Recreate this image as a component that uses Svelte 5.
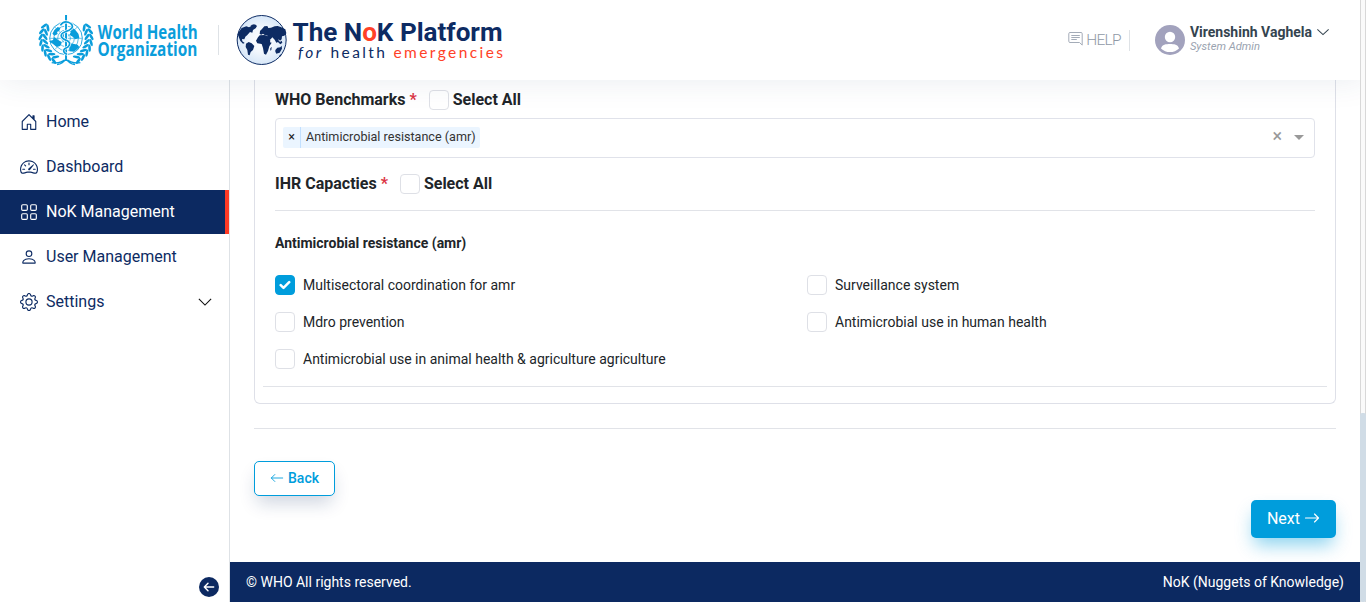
<script>
  const paths = {
    home: ['M8.354 1.146a.5.5 0 0 0-.708 0l-6 6A.5.5 0 0 0 1.5 7.5v7a.5.5 0 0 0 .5.5h4.5a.5.5 0 0 0 .5-.5v-4h2v4a.5.5 0 0 0 .5.5H14a.5.5 0 0 0 .5-.5v-7a.5.5 0 0 0-.146-.354L13 5.793V2.5a.5.5 0 0 0-.5-.5h-1a.5.5 0 0 0-.5.5v1.293L8.354 1.146zM2.5 14V7.707l5.5-5.5 5.5 5.5V14H10v-4a.5.5 0 0 0-.5-.5h-3a.5.5 0 0 0-.5.5v4H2.5z'],
    gauge: ['M8 4a.5.5 0 0 1 .5.5V6a.5.5 0 0 1-1 0V4.5A.5.5 0 0 1 8 4zM3.732 5.732a.5.5 0 0 1 .707 0l.915.914a.5.5 0 1 1-.708.708l-.914-.915a.5.5 0 0 1 0-.707zM2 10a.5.5 0 0 1 .5-.5h1.586a.5.5 0 0 1 0 1H2.5A.5.5 0 0 1 2 10zm9.5 0a.5.5 0 0 1 .5-.5h1.5a.5.5 0 0 1 0 1H12a.5.5 0 0 1-.5-.5zm.754-4.246a.389.389 0 0 0-.527-.02L7.547 9.31a.91.91 0 1 0 1.302 1.258l3.434-4.297a.389.389 0 0 0-.029-.518z', 'M0 10a8 8 0 1 1 15.547 2.661c-.442 1.253-1.845 1.602-2.932 1.25C11.309 13.488 9.475 13 8 13c-1.474 0-3.31.488-4.615.911-1.087.352-2.49.003-2.932-1.25A7.988 7.988 0 0 1 0 10zm8-7a7 7 0 0 0-6.603 9.329c.203.575.923.876 1.68.63C4.397 12.533 6.358 12 8 12s3.604.532 4.923.96c.757.245 1.477-.056 1.68-.631A7 7 0 0 0 8 3z'],
    grid: ['M1 2.5A1.5 1.5 0 0 1 2.5 1h3A1.5 1.5 0 0 1 7 2.5v3A1.5 1.5 0 0 1 5.5 7h-3A1.5 1.5 0 0 1 1 5.5v-3zM2.5 2a.5.5 0 0 0-.5.5v3a.5.5 0 0 0 .5.5h3a.5.5 0 0 0 .5-.5v-3a.5.5 0 0 0-.5-.5h-3zm6.5.5A1.5 1.5 0 0 1 10.5 1h3A1.5 1.5 0 0 1 15 2.5v3A1.5 1.5 0 0 1 13.5 7h-3A1.5 1.5 0 0 1 9 5.5v-3zm1.5-.5a.5.5 0 0 0-.5.5v3a.5.5 0 0 0 .5.5h3a.5.5 0 0 0 .5-.5v-3a.5.5 0 0 0-.5-.5h-3zM1 10.5A1.5 1.5 0 0 1 2.5 9h3A1.5 1.5 0 0 1 7 10.5v3A1.5 1.5 0 0 1 5.5 15h-3A1.5 1.5 0 0 1 1 13.5v-3zm1.5-.5a.5.5 0 0 0-.5.5v3a.5.5 0 0 0 .5.5h3a.5.5 0 0 0 .5-.5v-3a.5.5 0 0 0-.5-.5h-3zm6.5.5A1.5 1.5 0 0 1 10.5 9h3a1.5 1.5 0 0 1 1.5 1.5v3a1.5 1.5 0 0 1-1.5 1.5h-3A1.5 1.5 0 0 1 9 13.5v-3zm1.5-.5a.5.5 0 0 0-.5.5v3a.5.5 0 0 0 .5.5h3a.5.5 0 0 0 .5-.5v-3a.5.5 0 0 0-.5-.5h-3z'],
    person: ['M8 8a3 3 0 1 0 0-6 3 3 0 0 0 0 6zm2-3a2 2 0 1 1-4 0 2 2 0 0 1 4 0zm4 8c0 1-1 1-1 1H3s-1 0-1-1 1-4 6-4 6 3 6 4zm-1-.004c-.001-.246-.154-.986-.832-1.664C11.516 10.68 10.289 10 8 10c-2.29 0-3.516.68-4.168 1.332-.678.678-.83 1.418-.832 1.664h10z'],
    gear: ['M8 4.754a3.246 3.246 0 1 0 0 6.492 3.246 3.246 0 0 0 0-6.492zM5.754 8a2.246 2.246 0 1 1 4.492 0 2.246 2.246 0 0 1-4.492 0z', 'M9.796 1.343c-.527-1.79-3.065-1.79-3.592 0l-.094.319a.873.873 0 0 1-1.255.52l-.292-.16c-1.64-.892-3.433.902-2.54 2.541l.159.292a.873.873 0 0 1-.52 1.255l-.319.094c-1.79.527-1.79 3.065 0 3.592l.319.094a.873.873 0 0 1 .52 1.255l-.16.292c-.892 1.64.901 3.434 2.541 2.54l.292-.159a.873.873 0 0 1 1.255.52l.094.319c.527 1.79 3.065 1.79 3.592 0l.094-.319a.873.873 0 0 1 1.255-.52l.292.16c1.64.893 3.434-.902 2.54-2.541l-.159-.292a.873.873 0 0 1 .52-1.255l.319-.094c1.79-.527 1.79-3.065 0-3.592l-.319-.094a.873.873 0 0 1-.52-1.255l.16-.292c.893-1.64-.902-3.433-2.541-2.54l-.292.159a.873.873 0 0 1-1.255-.52l-.094-.319zm-2.633.283c.246-.835 1.428-.835 1.674 0l.094.319a1.873 1.873 0 0 0 2.693 1.115l.291-.16c.764-.415 1.6.42 1.184 1.185l-.159.292a1.873 1.873 0 0 0 1.116 2.692l.318.094c.835.246.835 1.428 0 1.674l-.319.094a1.873 1.873 0 0 0-1.115 2.693l.16.291c.415.764-.42 1.6-1.185 1.184l-.291-.159a1.873 1.873 0 0 0-2.693 1.116l-.094.318c-.246.835-1.428.835-1.674 0l-.094-.319a1.873 1.873 0 0 0-2.692-1.115l-.292.16c-.764.415-1.6-.42-1.184-1.185l.159-.291A1.873 1.873 0 0 0 1.945 8.93l-.319-.094c-.835-.246-.835-1.428 0-1.674l.319-.094A1.873 1.873 0 0 0 3.06 4.377l-.16-.292c-.415-.764.42-1.6 1.185-1.184l.292.159a1.873 1.873 0 0 0 2.692-1.115l.094-.319z']
  };
  const nav = [
    { label: 'Home', icon: 'home' },
    { label: 'Dashboard', icon: 'gauge' },
    { label: 'NoK Management', icon: 'grid', active: true },
    { label: 'User Management', icon: 'person' },
    { label: 'Settings', icon: 'gear', more: true }
  ];
  let capacities = $state([
    { label: 'Multisectoral coordination for amr', on: true },
    { label: 'Surveillance system', on: false },
    { label: 'Mdro prevention', on: false },
    { label: 'Antimicrobial use in human health', on: false },
    { label: 'Antimicrobial use in animal health & agriculture agriculture', on: false }
  ]);
  // leaves of the laurel wreath: angle round the emblem, measured from the bottom
  const leaves = [26, 39, 52, 65, 78, 91, 104, 117];
</script>

<div class="app">
  <header>
    <svg class="who" width="162" height="52" viewBox="0 0 162 52">
      <g transform="translate(-8.300 -10) scale(.33333)" fill="none" stroke="#0a9ddb" stroke-width="2.600">
        <circle cx="109" cy="103" r="49" />
        <circle cx="109" cy="103" r="37" stroke-width="2" />
        <circle cx="109" cy="103" r="25" stroke-width="2" />
        <circle cx="109" cy="103" r="13" stroke-width="2" />
        <path d="M60 103h98M74 68l70 70M144 68l-70 70" stroke-width="1.800" />
        <g fill="#0a9ddb" stroke="none">
          <path d="M74 78l10-9 8 3-3 8-7 4 2 6-10 5-6-6zM58 112l12-4 4-9 10 8 12 7-4 12-12 2-10-8zM118 124l12-5 14 3 5 8-16 13-14-1zM124 74l9 1 13 14 3 12-12 5-8-8-9-5 3-9zM92 92l10-4v12l-8 4z" />
          {#each leaves as a}
            <g transform="rotate({a} 109 104)">
              <ellipse cx="105" cy="167" rx="11" ry="4" transform="rotate(-36 105 167)" />
              <ellipse cx="105" cy="180" rx="11" ry="4" transform="rotate(28 105 180)" />
            </g>
            <g transform="rotate({-a} 109 104)">
              <ellipse cx="113" cy="167" rx="11" ry="4" transform="rotate(36 113 167)" />
              <ellipse cx="113" cy="180" rx="11" ry="4" transform="rotate(-28 113 180)" />
            </g>
          {/each}
        </g>
        <path d="M66 176q26 4 43-12q17 16 43 12M82 182q18-3 27-17q9 14 27 17" stroke-width="4" />
        <path d="M109 32v135" stroke="#fff" stroke-width="11" />
        <path d="M109 33v138" stroke-width="6" />
        <path d="M92 64q9-14 24-9q17 7 10 18q-5 6-19 10q-17 6-11 17q4 6 14 9q14 6 8 16q-3 5-9 7q-10 5-6 12q3 5 9 7" stroke="#fff" stroke-width="9" />
        <path d="M92 64q9-14 24-9q17 7 10 18q-5 6-19 10q-17 6-11 17q4 6 14 9q14 6 8 16q-3 5-9 7q-10 5-6 12q3 5 9 7" stroke-width="5" />
      </g>
      <text x="59.800" y="24.500" textLength="99.800" lengthAdjust="spacingAndGlyphs">World Health</text>
      <text x="59.500" y="42.300" textLength="100" lengthAdjust="spacingAndGlyphs">Organization</text>
    </svg>
    <span class="logo-rule"></span>
    <svg class="nok" width="268" height="52" viewBox="0 0 268 52">
      <defs>
        <radialGradient id="sea"><stop offset="0" stop-color="#fff" /><stop offset=".5" stop-color="#f2f7fd" /><stop offset="1" stop-color="#d7e7f8" /></radialGradient>
      </defs>
      <g transform="translate(-26 -9) scale(.33333)">
        <circle cx="155" cy="105" r="73.500" fill="url(#sea)" stroke="#0d2b63" stroke-width="3" />
        <path fill="#0d2b63" d="M87 80l8-11 14-5 8 3 11-6 13 2-4 7-8 5-2 8-7-2-8 9-6 5-3 8-7-1 1 7 7 5-5 2-8-8-5-13-3-7zM121 61l11-3 9 3-9 5zM108 116l8-5 9 4 8 8-4 12-7 6-3 10-5-2-2-14-5-9zM144 97l5-6 14-1 13 5 5 12-1 5 5 1-7 11-4 14-6 11-6-3-3-17-4-12-13-2-4-8zM149 87l1-9 6-6 7-8 9-1 3 6 8-1 11-4 9-1 9 3 14 7 3 12-6 7-7 2-1 9-5 4-4-4-3 9-4 1-5-9-7-7-5 6-7 3-6-9 4-5-9-2-5-4-5 3zM205 105l5 6 5-4 2 6-6 5-8-8zM196 135l6-7 9-1 4-5 1 9-7 12-10 3-3-6zM207 153l7-6 1 3-6 7zM181 130l4-5-1 10-3 2z" />
      </g>
      <text class="big" x="56.500" y="27.200" textLength="210" lengthAdjust="spacingAndGlyphs">The N<tspan fill="#ff4127">o</tspan>K Platform</text>
      <g class="small">
        <text x="62" y="44.300" font-style="italic">for</text>
        <text x="94.500" y="44.300" textLength="57">health</text>
        <text x="157.500" y="44.300" textLength="112" class="red">emergencies</text>
      </g>
    </svg>
    <div class="grow"></div>
    <div class="help">
      <svg width="15" height="14" viewBox="0 0 15 14" fill="none" stroke="#a4acb8"><path d="M2 .5h11a1.200 1.200 0 0 1 1.200 1.200v11.400l-2.700-2.600H2A1.200 1.200 0 0 1 .8 9.300V1.700A1.200 1.200 0 0 1 2 .5zM3.300 3.500h8.500M3.300 5.500h8.500M3.300 7.500h5.500" /></svg>
      <span>HELP</span>
    </div>
    <svg class="avatar" width="30" height="30" viewBox="0 0 30 30"><circle cx="15" cy="15" r="15" fill="#a2a2bd" /><circle cx="15" cy="12" r="5.200" fill="#fff" /><path d="M6 23.500c1-4 5-4.500 9-4.500s8 .500 9 4.500a13 13 0 0 1-18 0z" fill="#fff" /></svg>
    <div class="user">
      <strong>Virenshinh Vaghela</strong>
      <em>System Admin</em>
    </div>
    <svg class="caret" width="12" height="12" viewBox="0 0 16 16"><path d="M.5 4.500l7.500 7 7.500-7" fill="none" stroke="#34444f" stroke-width="1.400" /></svg>
  </header>

  <div class="body">
    <aside>
      <nav>
        {#each nav as item}
          <a class:active={item.active} href="#top">
            <svg width="18" height="18" viewBox="0 0 16 16" fill="currentColor">
              {#each paths[item.icon] as d}<path {d} />{/each}
            </svg>
            <span>{item.label}</span>
            {#if item.more}
              <svg class="more" width="14" height="14" viewBox="0 0 16 16"><path d="M1 4.500l7 7 7-7" fill="none" stroke="#111" stroke-width="1.300" /></svg>
            {/if}
          </a>
        {/each}
      </nav>
      <button class="collapse" aria-label="Collapse">
        <svg width="12" height="12" viewBox="0 0 12 12" fill="none" stroke="#fff" stroke-width="1.400" stroke-linecap="round" stroke-linejoin="round"><path d="M10.700 6H1.500M5 2.200L1.300 6 5 9.800" /></svg>
      </button>
    </aside>

    <main>
      <section class="card">
        <div class="title">WHO Benchmarks <i>*</i><span class="box"></span>Select All</div>
        <div class="select">
          <div class="tag"><span class="x">×</span><span class="t">Antimicrobial resistance (amr)</span></div>
          <span class="clear">×</span>
          <span class="arrow"></span>
        </div>
        <div class="title second">IHR Capacties <i>*</i><span class="box"></span>Select All</div>
        <hr class="inner" />
        <h6>Antimicrobial resistance (amr)</h6>
        <div class="checks">
          {#each capacities as c}
            <button class="check" onclick={() => (c.on = !c.on)}>
              <span class="box" class:on={c.on}>
                {#if c.on}<svg width="12" height="10" viewBox="0 0 12 10"><path d="M1.700 5.200l2.800 2.700 5.700-5.700" fill="none" stroke="#fff" stroke-width="2.500" stroke-linecap="round" stroke-linejoin="round" /></svg>{/if}
              </span>
              {c.label}
            </button>
          {/each}
        </div>
        <hr class="wide" />
      </section>
      <hr class="after" />
      <button class="back">
        <svg width="14" height="14" viewBox="0 0 16 16" fill="none" stroke="currentColor" stroke-linecap="round" stroke-linejoin="round"><path d="M14.500 8H1.500M5.500 4l-4 4 4 4" /></svg>Back
      </button>
      <button class="next">
        Next<svg width="16" height="16" viewBox="0 0 16 16" fill="none" stroke="currentColor" stroke-width="1.150" stroke-linecap="round" stroke-linejoin="round"><path d="M1.500 8h13M10.500 4l4 4-4 4" /></svg>
      </button>
      <footer><span>© WHO All rights reserved.</span><span>NoK (Nuggets of Knowledge)</span></footer>
    </main>
    <div class="scroll"><div class="thumb"></div></div>
  </div>
</div>

<style>
  :global(body) { overflow: hidden; }
  .app { width: 1366px; height: 602px; display: flex; flex-direction: column; font-family: Roboto, sans-serif; color: #212529; background: #fff; overflow: hidden; box-sizing: border-box; }
  .app :global(*) { box-sizing: border-box; }
  svg { display: block; flex: none; }
  button { font-family: inherit; cursor: pointer; margin: 0; }
  header { height: 80px; flex: none; display: flex; align-items: center; padding: 0 37px 0 38px; background: #fff; box-shadow: 0 0 32px rgba(40, 70, 110, .1); position: relative; z-index: 2; }
  .who { overflow: visible; }
  .who text { font: 700 19.300px "Open Sans", sans-serif; fill: #0a9ddb; }
  .logo-rule { width: 1px; height: 30px; background: #dee2e6; margin: 0 17px 0 18px; }
  .nok { overflow: visible; }
  .big { font: 700 25.700px Roboto, sans-serif; fill: #0d2b63; }
  .small { font: 15.500px Lato, sans-serif; fill: #0d2b63; letter-spacing: 2.500px; }
  .red { fill: #ff4127; }
  .grow { flex: 1; }
  .help { display: flex; align-items: center; gap: 3px; height: 21px; padding-right: 8px; border-right: 1px solid #dee2e6; color: #8f99a6; font-size: 15.500px; font-weight: 300; letter-spacing: -.7px; line-height: 20px; }
  .help svg { margin-top: -3px; }
  .avatar { margin: 0 5px 0 25px; }
  .user { display: flex; flex-direction: column; margin-top: -4px; }
  .user strong { font-size: 14px; line-height: 17px; color: #34444f; }
  .user em { font-size: 11.200px; line-height: 12px; color: #9aa3b0; }
  .caret { margin: -16px 0 0 5px; }
  .body { flex: 1; display: flex; min-height: 0; }
  aside { width: 230px; flex: none; border-right: 1px solid #dee2e6; display: flex; flex-direction: column; justify-content: space-between; }
  nav { display: flex; flex-direction: column; gap: 1px; padding-top: 20px; }
  nav a { height: 44px; display: flex; align-items: center; padding: 0 17px 0 20px; color: #0d2b63; text-decoration: none; font-size: 16px; line-height: 24px; }
  nav a span { margin-left: 8px; }
  nav a.active { background: #0c2961; color: #fff; border-right: 4px solid #ff3a24; }
  nav a svg { margin-top: -1px; }
  nav a .more { margin: 0 0 0 auto; }
  .collapse { align-self: flex-end; width: 20px; height: 20px; margin: 0 10px 5px 0; padding: 0; border: 0; border-radius: 50%; background: #0c2961; display: flex; align-items: center; justify-content: center; }
  main { flex: 1; display: flex; flex-direction: column; min-width: 0; }
  .card { height: 324px; margin: 0 24px; padding: 9px 20px 0; border: 1px solid #dee0e8; border-top: 0; border-radius: 0 0 6px 6px; flex: none; }
  .title { height: 21px; display: flex; align-items: center; font-size: 16px; font-weight: 700; white-space: pre; }
  .title i { color: #dc3545; font-style: normal; }
  .box { width: 20px; height: 20px; flex: none; border: 1px solid #dee0e6; border-radius: 4px; background: #fff; display: flex; align-items: center; justify-content: center; }
  .title .box { margin: 0 4px 0 12px; }
  .box.on { background: #009ddc; border-color: #009ddc; }
  .select { height: 40px; margin-top: 8px; border: 1px solid #e0e2ea; border-radius: 4px; display: flex; align-items: center; padding: 0 10px 0 7px; }
  .tag { height: 21px; margin-top: -2px; display: flex; align-items: center; background: #ebf5ff; border-radius: 2px; color: #333; font-size: 12.600px; line-height: 19px; }
  .x { width: 18px; height: 21px; text-align: center; border-right: 1px solid #c2e0ff; color: #222; }
  .t { padding: 0 4px 0 5px; height: 21px; }
  .clear { margin: -5px 12px 0 auto; font-size: 18px; color: #999; }
  .arrow { border: 5px solid transparent; border-top-color: #999; border-bottom: 0; margin-top: -1px; }
  .second { margin-top: 15px; }
  hr { border: 0; height: 1px; background: #e1e3e8; flex: none; margin: 0; }
  .inner { margin-top: 16px; }
  h6 { font-size: 14px; line-height: 20px; margin: 22px 0 0; }
  .checks { display: grid; grid-template-columns: 532px 1fr; row-gap: 17px; margin-top: 22px; }
  .check { height: 20px; display: flex; align-items: center; gap: 8px; padding: 0; border: 0; background: none; font-size: 14px; color: #212529; }
  .wide { margin: 17px -12px 0; }
  .after { margin: 24px 24px 0; }
  .back { align-self: flex-start; width: 81px; height: 35px; margin: 32px 0 0 24px; padding: 0 0 2px; display: flex; align-items: center; justify-content: center; gap: 4px; border: 1px solid #009ddc; border-radius: 5px; background: #fff; color: #009ddc; font-size: 14px; font-weight: 500; box-shadow: 0 10px 18px -3px rgba(13, 43, 99, .2); }
  .next { align-self: flex-end; width: 85px; height: 38px; margin: 4px 24px 0 0; padding: 0 0 2px; display: flex; align-items: center; justify-content: center; gap: 4px; border: 0; border-radius: 5px; background: #009ddc; color: #fff; font-size: 16px; box-shadow: 0 10px 18px -3px rgba(0, 157, 220, .45); }
  footer { height: 40px; margin-top: auto; padding: 0 16px; display: flex; align-items: center; justify-content: space-between; background: #0c2961; color: #fff; font-size: 14px; position: relative; }
  .scroll { width: 6px; border: 1px solid #d8d8d8; border-width: 0 1px; background: #fafafa; display: flex; flex-direction: column; justify-content: flex-end; z-index: 3; margin-top: -80px; }
  .thumb { height: 189px; margin: 0 -1px; background: #d0dce6; border-radius: 2px; }
</style>
